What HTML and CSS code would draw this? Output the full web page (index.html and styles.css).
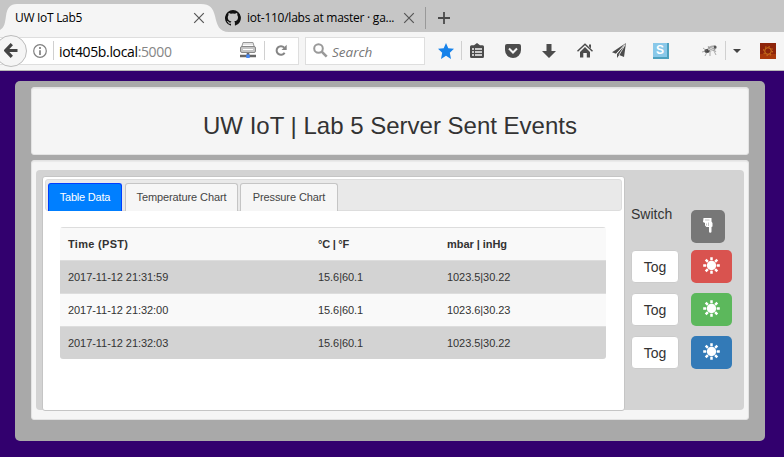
FILE: index.html
```html
<!DOCTYPE html>
<html lang="en">
<head>
<meta charset="utf-8">
<title>UW IoT Lab5</title>
<link rel="stylesheet" href="styles.css">
</head>
<body>
<svg class="defs" aria-hidden="true">
  <symbol id="close" viewBox="0 0 12 12"><path d="M1.2 1.2l9.6 9.6M10.8 1.2l-9.6 9.6" fill="none" stroke="#555" stroke-width="1.2"/></symbol>
  <symbol id="led" viewBox="0 0 17 17"><circle cx="8.5" cy="8.5" r="4.7"/><path d="M8.5 .2v3M8.5 13.8v3M.2 8.500h3M13.800 8.500h3M2.700 2.700l2.200 2.200M12.100 12.100l2.200 2.200M14.300 2.700l-2.200 2.200M4.900 12.100l-2.200 2.200" stroke="#fff" stroke-width="2.5"/></symbol>
</svg>
<header class="browser">
  <div class="tabbar">
    <div class="tab active">
      <svg class="tab-shape" width="230" height="32" viewBox="0 0 230 32"><path d="M0 30C5 27 5 22 6 16C7 8 10 4 17 4H201C210 4 213 8 215 16C217 25 219 32 229 32H0z" fill="#f5f5f5"/></svg>
      <span class="tab-title first-title">UW IoT Lab5</span>
      <svg class="close" width="12" height="12"><use href="#close"/></svg>
    </div>
    <div class="tab second">
      <svg width="16" height="16" viewBox="0 0 16 16"><path fill="#111" d="M8 0a8 8 0 0 0-2.500 15.600c.4.1.5-.2.5-.4v-1.500c-2 .4-2.600-.5-2.800-1-.2-.3-.5-1-.9-1.200-.3-.2-.7-.6 0-.6.600 0 1.100.6 1.200.8.700 1.200 1.900.9 2.400.7.1-.5.300-.9.500-1.100-1.800-.2-3.600-.9-3.600-4 0-.9.300-1.600.8-2.200-.1-.2-.4-1 .1-2.100 0 0 .7-.2 2.200.8a7.700 7.700 0 0 1 4 0c1.500-1 2.200-.8 2.200-.8.500 1.100.2 1.900.1 2.100.5.600.8 1.300.8 2.200 0 3.100-1.900 3.700-3.700 4 .3.200.6.700.6 1.500v2.400c0 .2.100.5.500.4A8 8 0 0 0 8 0z"/></svg>
      <span class="tab-title second-title">iot-110/labs at master · ga...</span>
      <svg class="close" width="12" height="12"><use href="#close"/></svg>
    </div>
    <div class="newtab"><svg width="14" height="14" viewBox="0 0 14 14"><path d="M7 1v12M1 7h12" stroke="#4a4a4a" stroke-width="1.800"/></svg></div>
  </div>
  <div class="toolbar">
    <div class="address">
      <div class="back"><svg width="14" height="15" viewBox="0 0 14 15"><path d="M7.800 1.200L1.800 7.500l6 6.300M2.500 7.500H13.500" fill="none" stroke="#444" stroke-width="3.200"/></svg></div>
      <svg class="info" width="14" height="14" viewBox="0 0 14 14"><circle cx="7" cy="7" r="6.300" fill="none" stroke="#808080" stroke-width="1.200"/><path d="M7 3v2M7 6.200V11" stroke="#808080" stroke-width="1.700"/></svg>
      <i class="rule"></i>
      <span class="url">iot405b.local<em>:5000</em></span>
      <svg class="server" width="16" height="17" viewBox="0 0 16 17"><path d="M3 .5h10l1.500 5h-13z" fill="#e2e2e2" stroke="#999"/><rect x=".5" y="4.500" width="15" height="6" rx="1.500" fill="#c4c4c4" stroke="#888"/><path d="M3 3.500h10M3 7.500h10" stroke="#fff"/><path d="M8 11v3M0 14h16" stroke="#666" stroke-width="2.600"/><rect x="6.300" y="12.500" width="3.400" height="3.500" fill="#4488f5"/></svg>
      <i class="rule"></i>
      <svg class="reload" width="13" height="13" viewBox="0 0 13 13"><path d="M9.600 8.700a4.300 4.300 0 1 1-.4-5" fill="none" stroke="#858585" stroke-width="2"/><path d="M11.700.8V6H6.500z" fill="#858585"/></svg>
    </div>
    <div class="search">
      <svg width="15" height="15" viewBox="0 0 15 15"><circle cx="5.500" cy="5.500" r="4.300" fill="none" stroke="#999" stroke-width="2"/><path d="M8.700 8.700l5 5" stroke="#999" stroke-width="2.600"/></svg>
      <span>Search</span>
    </div>
    <div class="tools">
      <svg width="16" height="16" viewBox="0 0 16 16"><path fill="#1682ea" d="M8 0l2.300 5.200 5.700.6-4.200 3.900L13 16 8 12.800 3 16l1.200-6.300L0 5.800l5.700-.6z"/></svg>
      <i class="rule star-rule"></i>
      <svg width="14" height="15" viewBox="0 0 14 15"><path d="M4 2.200L7 0l3 2.200h2.500A1.500 1.500 0 0 1 14 3.700v9.800a1.500 1.500 0 0 1-1.500 1.500h-11A1.500 1.500 0 0 1 0 13.500V3.700a1.500 1.500 0 0 1 1.500-1.500z" fill="#4c4c4c"/><path d="M2 6h2M5 6h7M2 9h2M5 9h7M2 12h2M5 12h7" stroke="#f5f5f5" stroke-width="1.500"/></svg>
      <svg class="pocket" width="16" height="14" viewBox="0 0 16 14"><path d="M2 0h12a2 2 0 0 1 2 2v4A8 8 0 0 1 0 6V2a2 2 0 0 1 2-2z" fill="#4c4c4c"/><path d="M4 4.500l4 4 4-4" fill="none" stroke="#f5f5f5" stroke-width="2"/></svg>
      <svg class="down" width="14" height="14" viewBox="0 0 14 14"><path d="M4.500 0h5v7H14l-7 7-7-7h4.500z" fill="#4c4c4c"/></svg>
      <svg class="home" width="16" height="15" viewBox="0 0 16 15"><path d="M.5 8.200L8 1.200l7.500 7" fill="none" stroke="#4c4c4c" stroke-width="1.500"/><path d="M12 1.500h2v4l-2-2zM8 4l5 5v5.500H9.800V10H6.300v4.500H3V9z" fill="#4c4c4c"/></svg>
      <svg class="plane" width="14" height="15" viewBox="0 0 14 15"><path d="M14 0L0 9.300l4 1.500z" fill="#4c4c4c"/><path d="M14 0L5 11v4l2.200-3L12 14z" fill="#4c4c4c"/><path d="M13 1.500L4.500 10.700M13 2L7 12" stroke="#f5f5f5" stroke-width=".8"/></svg>
      <div class="stumble">S</div>
      <svg class="bug" width="16" height="13" viewBox="0 0 16 13"><ellipse cx="10" cy="4.300" rx="4.700" ry="2.700" transform="rotate(-20 10 4.300)" fill="#aaa"/><ellipse cx="5" cy="7" rx="2.600" ry="2" fill="#444"/><circle cx="13" cy="3" r="1.500" fill="#555"/><path d="M5 7L1 4M4 7L0 8M5 8l-2 4M8 7v5M11 5l3 6M8 5L6 2M10 3l4 5" stroke="#777" stroke-width=".6"/><path d="M6 6l6-3M8 7l4-2" stroke="#e5e5e5" stroke-width=".9"/></svg>
      <i class="rule bug-rule"></i>
      <svg class="caret" width="8" height="4" viewBox="0 0 8 4"><path d="M0 0h8L4 4z" fill="#444"/></svg>
      <svg class="gear" width="16" height="16" viewBox="0 0 16 16"><path fill="#8e250b" d="M0 0h16v16H0z"/><path fill="#a9390c" d="M0 11h16v5H0z"/><circle cx="8" cy="8" r="3.300" fill="#8a240a" stroke="#d07a1c" stroke-width="1"/><circle cx="8" cy="8" r="4.500" fill="none" stroke="#c5681a" stroke-width="1.200" stroke-dasharray="1.400 2.134"/></svg>
    </div>
  </div>
</header>
<main class="container">
  <section class="well heading"><h1>UW IoT | Lab 5 Server Sent Events</h1></section>
  <section class="well body-well">
    <div class="board">
      <div class="panel">
        <nav class="tabs">
          <a class="selected">Table Data</a><a class="temperature">Temperature Chart</a><a class="pressure">Pressure Chart</a>
        </nav>
        <table>
          <thead><tr><th class="time">Time (PST)</th><th class="temp">°C | °F</th><th class="pressure-head">mbar | inHg</th></tr></thead>
          <tbody>
            <tr><td>2017-11-12 21:31:59</td><td>15.6|60.1</td><td>1023.5|30.22</td></tr>
            <tr><td>2017-11-12 21:32:00</td><td>15.6|60.1</td><td>1023.6|30.23</td></tr>
            <tr><td>2017-11-12 21:32:03</td><td>15.6|60.1</td><td>1023.5|30.22</td></tr>
          </tbody>
        </table>
      </div>
      <div class="controls">
        <span class="switch">Switch</span>
        <div class="btn hand"><svg width="10" height="15" viewBox="0 0 10 15"><path d="M.5 0h8v3.500l1 1.500v3.500L8.500 9v4.500a1 1 0 0 1-2.500 0V9H3.500L2 7.500V5L0 4z" fill="#fff"/><path d="M2 2h4.500M3.500 5.500v2M5.500 4.500V8" stroke="#aaa" stroke-width=".7"/></svg></div>
        <div class="btn tog">Tog</div><div class="btn led red"><svg width="17" height="17"><use href="#led"/></svg></div>
        <div class="btn tog">Tog</div><div class="btn led green"><svg width="17" height="17"><use href="#led"/></svg></div>
        <div class="btn tog">Tog</div><div class="btn led blue"><svg width="17" height="17"><use href="#led"/></svg></div>
      </div>
    </div>
  </section>
</main>
</body>
</html>
```
FILE: styles.css
```css
* { box-sizing: border-box; }
body { margin: 0; width: 784px; height: 457px; overflow: hidden; background: #32006e; color: #333; font: 14px/20px "Liberation Sans", Arial, sans-serif; }
svg { display: block; flex: none; }
.defs { position: absolute; width: 0; height: 0; }
.browser { height: 71px; font-family: "Open Sans", "Noto Sans", sans-serif; }
.tabbar { display: flex; height: 32px; background: #c6c6c6; }
.tab { display: flex; align-items: center; height: 32px; padding-top: 4px; color: #000; font-size: 12px; line-height: 28px; white-space: nowrap; }
.tab.active { position: relative; width: 225px; padding-left: 15px; }
.tab-shape { position: absolute; left: 0; top: 0; }
.tab-title { position: relative; overflow: hidden; }
.first-title { width: 178px; letter-spacing: -.3px; }
.close { position: relative; }
.second-title { width: 156px; margin-left: 6px; letter-spacing: -.25px; }
.newtab { display: flex; align-items: center; height: 22px; margin: 7px 0 0 10px; padding-left: 11px; border-left: 1px solid #999; }
.toolbar { display: flex; align-items: center; height: 39px; padding-bottom: 1px; background: #f5f5f5; border-bottom: 1px solid #b7b7b7; }
.address, .search { display: flex; align-items: center; height: 28px; background: #fff; border: 1px solid #dedede; }
.address { width: 299px; border-left: 0; }
.back { display: flex; align-items: center; justify-content: center; flex: none; width: 32px; height: 32px; margin-left: -5px; border: 1px solid #bcbcbc; border-radius: 50%; background: #f5f5f5; }
.info { margin-left: 6px; }
.rule { flex: none; width: 1px; height: 19px; background: #d0d0d0; }
.info + .rule { margin: 0 5px 0 6px; }
.url { width: 181px; margin-top: 2px; color: #000; font-size: 14px; letter-spacing: -.35px; }
.url em { color: #858585; font-style: normal; }
.server { margin-right: 8px; }
.reload { margin-left: 10px; }
.search { width: 120px; margin-left: 6px; padding-left: 7px; color: #777; font-size: 13.5px; font-style: italic; }
.search span { margin: 2px 0 0 4px; }
.tools { display: flex; align-items: center; margin-left: 13px; }
.star-rule { margin: 0 8px 0 7px; }
.pocket { margin-left: 21px; }
.down { margin-left: 21px; }
.home { margin-left: 21px; }
.plane { margin-left: 19px; }
.stumble { width: 16px; height: 16px; margin-left: 27px; border-right: 2px solid #4da0be; border-bottom: 2px solid #4da0be; background: #89c8e9; color: #fff; font: bold 12px/14px "Liberation Sans", sans-serif; text-align: center; }
.bug { margin-left: 33px; }
.bug-rule { margin: 0 7px 0 7px; }
.gear { margin-left: 19px; }
.container { width: 750px; height: 360px; margin: 10px 0 0 15px; padding: 6px 16px 0; border-radius: 5px; background: #a9a9a9; }
.well { border: 1px solid #e3e3e3; border-radius: 3px; background: #f5f5f5; box-shadow: inset 0 1px 1px rgba(0,0,0,.05); }
.heading { height: 68px; margin-bottom: 5px; }
h1 { margin: 24px 0 0; text-align: center; font-size: 24px; line-height: 28px; font-weight: 400; }
.body-well { height: 260px; padding: 9px 4px; }
.board { display: flex; height: 240px; padding: 6px 0 0 6px; border-radius: 4px; background: #d3d3d3; }
.panel { width: 583px; height: 235px; padding: 2px; border: 1px solid #c5c5c5; border-radius: 3px; background: #fff; }
.tabs { display: flex; gap: 2px; height: 32px; padding: 3px 2px 0; border: 1px solid #ddd; border-radius: 3px; background: #e9e9e9; }
.tabs a { height: 28px; border: 1px solid #c5c5c5; border-bottom: 0; border-radius: 3px 3px 0 0; background: #f6f6f6; color: #454545; font-size: 11px; line-height: 27px; text-align: center; white-space: nowrap; letter-spacing: -.1px; }
.tabs .selected { width: 74px; margin-right: 1px; border-color: #003eff; background: #007fff; color: #fff; letter-spacing: -.2px; }
.temperature { width: 113px; }
.pressure { width: 98px; }
table { width: 546px; margin: 16px 0 0 15px; border-spacing: 0; table-layout: fixed; font-size: 11px; line-height: 16px; background: #f9f9f9; border-radius: 3px; overflow: hidden; }
th, td { height: 33px; padding: 0 8px 1px; border-top: 1px solid #ddd; text-align: left; vertical-align: middle; }
td { letter-spacing: -.06px; }
.time { width: 250px; letter-spacing: .3px; }
.temp { width: 129px; letter-spacing: -.25px; }
.pressure-head { letter-spacing: -.05px; }
tbody tr:nth-child(odd) { background: #d3d3d3; }
.controls { display: grid; grid-template-columns: 48px 41px; grid-template-rows: 30px 33px 33px 33px; gap: 10px 12px; align-content: start; margin: 34px 0 0 6px; }
.switch { margin-top: -6px; }
.btn { display: flex; justify-content: center; height: 33px; border-radius: 5px; font-size: 14px; line-height: 30px; }
.hand { width: 34px; padding-top: 8px; background: #777; }
.tog { border: 1px solid #ccc; border-radius: 4px; background: #fff; line-height: 32px; }
.led { padding-top: 7px; fill: #fff; }
.red { background: #d9534f; }
.green { background: #5cb85c; }
.blue { background: #337ab7; }
```
